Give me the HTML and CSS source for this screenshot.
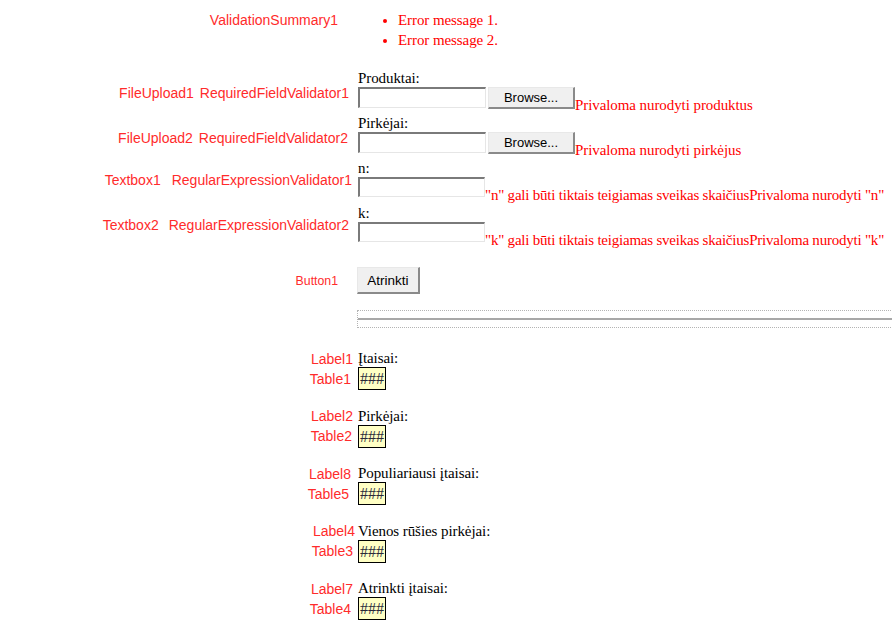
FILE: index.html
```html
<!DOCTYPE html>
<html>
<head>
<meta charset="utf-8">
<title>Atrinkimas</title>
<link rel="stylesheet" href="styles.css">
</head>
<body>
<div class="page">

  <div class="row row-summary">
    <div class="lab pr20 lab-top">ValidationSummary1</div>
    <div class="cnt">
      <ul class="errors">
        <li>Error message 1.</li>
        <li>Error message 2.</li>
      </ul>
    </div>
  </div>

  <div class="row row-field">
    <div class="lab pr9 lab-file"><span>FileUpload1</span><span class="gap6">RequiredFieldValidator1</span></div>
    <div class="cnt">
      <div class="caption">Produktai:</div>
      <div class="inputline">
        <input class="tb" type="text">
        <button class="browse" type="button">Browse...</button>
        <span class="err">Privaloma nurodyti produktus</span>
      </div>
    </div>
  </div>

  <div class="row row-field">
    <div class="lab pr10 lab-file"><span>FileUpload2</span><span class="gap6">RequiredFieldValidator2</span></div>
    <div class="cnt">
      <div class="caption">Pirkėjai:</div>
      <div class="inputline">
        <input class="tb" type="text">
        <button class="browse" type="button">Browse...</button>
        <span class="err">Privaloma nurodyti pirkėjus</span>
      </div>
    </div>
  </div>

  <div class="row row-field">
    <div class="lab pr6 lab-tb"><span>Textbox1</span><span class="gap11">RegularExpressionValidator1</span></div>
    <div class="cnt">
      <div class="caption">n:</div>
      <div class="inputline">
        <input class="tb tb-num" type="text">
        <span class="err err-long">"n" gali būti tiktais teigiamas sveikas skaičiusPrivaloma nurodyti "n"</span>
      </div>
    </div>
  </div>

  <div class="row row-field">
    <div class="lab pr9 lab-tb"><span>Textbox2</span><span class="gap10">RegularExpressionValidator2</span></div>
    <div class="cnt">
      <div class="caption">k:</div>
      <div class="inputline">
        <input class="tb tb-num" type="text">
        <span class="err err-long">"k" gali būti tiktais teigiamas sveikas skaičiusPrivaloma nurodyti "k"</span>
      </div>
    </div>
  </div>

  <div class="row row-btn">
    <div class="lab pr20 lab-small">Button1</div>
    <div class="cnt">
      <button class="submit" type="button">Atrinkti</button>
    </div>
  </div>

  <div class="row row-sep">
    <div class="lab"></div>
    <div class="cnt">
      <div class="sep"><div class="sep-line"></div></div>
    </div>
  </div>

  <div class="groups">
    <div class="group">
      <div class="row row-label"><div class="lab pr5">Label1</div><div class="cnt">Įtaisai:</div></div>
      <div class="row row-table"><div class="lab pr7">Table1</div><div class="cnt"><div class="tbl">###</div></div></div>
    </div>
    <div class="group">
      <div class="row row-label"><div class="lab pr5">Label2</div><div class="cnt">Pirkėjai:</div></div>
      <div class="row row-table"><div class="lab pr6">Table2</div><div class="cnt"><div class="tbl">###</div></div></div>
    </div>
    <div class="group">
      <div class="row row-label"><div class="lab pr7">Label8</div><div class="cnt">Populiariausi įtaisai:</div></div>
      <div class="row row-table"><div class="lab pr9">Table5</div><div class="cnt"><div class="tbl">###</div></div></div>
    </div>
    <div class="group">
      <div class="row row-label"><div class="lab pr3">Label4</div><div class="cnt">Vienos rūšies pirkėjai:</div></div>
      <div class="row row-table"><div class="lab pr5">Table3</div><div class="cnt"><div class="tbl">###</div></div></div>
    </div>
    <div class="group">
      <div class="row row-label"><div class="lab pr5">Label7</div><div class="cnt">Atrinkti įtaisai:</div></div>
      <div class="row row-table"><div class="lab pr7">Table4</div><div class="cnt"><div class="tbl">###</div></div></div>
    </div>
  </div>

</div>
</body>
</html>
```

FILE: styles.css
```css
html, body {
  margin: 0;
  padding: 0;
  background: #ffffff;
}

body {
  font-family: "Liberation Serif", "Times New Roman", serif;
  font-size: 15px;
  letter-spacing: -0.08px;
  color: #000;
  overflow: hidden;
}

.page {
  width: 892px;
  overflow: hidden;
}

.row {
  display: flex;
}

.lab {
  width: 358px;
  flex: none;
  box-sizing: border-box;
  text-align: right;
  font-family: "Liberation Sans", Arial, sans-serif;
  font-size: 14px;
  letter-spacing: 0;
  line-height: 16px;
  color: #ff2b2b;
  white-space: nowrap;
}

.lab-small {
  font-size: 12.3px;
}

.cnt {
  flex: 1;
  min-width: 0;
  white-space: nowrap;
}

.pr3 { padding-right: 3px; }
.pr5 { padding-right: 5px; }
.pr6 { padding-right: 6px; }
.pr7 { padding-right: 7px; }
.pr9 { padding-right: 9px; }
.pr10 { padding-right: 10px; }
.pr20 { padding-right: 20px; }

.gap6 { margin-left: 6px; }
.gap10 { margin-left: 10px; }
.gap11 { margin-left: 11px; }

/* validation summary */
.row-summary {
  height: 69px;
  align-items: flex-start;
}

.lab-top {
  padding-top: 12px;
}

.errors {
  margin: 0;
  padding: 10px 0 0 40px;
  color: #ff0000;
  line-height: 20px;
}

/* field blocks */
.row-field {
  height: 45px;
  align-items: center;
}

.lab-file {
  padding-top: 3px;
}

.lab-tb {
  padding-bottom: 4px;
}

.caption {
  height: 18px;
  line-height: 18px;
}

.inputline {
  display: flex;
  align-items: flex-end;
  height: 27px;
}

.tb {
  align-self: flex-start;
  width: 128px;
  height: 21px;
  box-sizing: border-box;
  margin: 0;
  padding: 0;
  border-style: solid;
  border-width: 2px 1px 1px 2px;
  border-color: #7a7a7a #e6e6e6 #e6e6e6 #7a7a7a;
  background: #fff;
  outline: none;
}

.tb-num {
  width: 127px;
  height: 20px;
}

.browse {
  align-self: flex-start;
  width: 87px;
  height: 22px;
  margin: 0 0 0 2px;
  padding: 0;
  box-sizing: border-box;
  border-style: solid;
  border-width: 1px 2px 2px 1px;
  border-color: #e8e8e8 #8a8a8a #8a8a8a #e8e8e8;
  background: #f0f0f0;
  font-family: "Liberation Sans", Arial, sans-serif;
  font-size: 13px;
  letter-spacing: 0;
  color: #000;
}

.err {
  color: #ff0000;
  line-height: 18px;
}

.err-long {
  letter-spacing: -0.22px;
}

/* button row */
.row-btn {
  padding-top: 18px;
  align-items: center;
}

.submit {
  display: block;
  margin: 0 0 0 -1px;
  width: 63px;
  height: 27px;
  padding: 0;
  box-sizing: border-box;
  border-style: solid;
  border-width: 1px 2px 2px 1px;
  border-color: #e8e8e8 #8a8a8a #8a8a8a #e8e8e8;
  background: #f0f0f0;
  font-family: "Liberation Sans", Arial, sans-serif;
  font-size: 13.5px;
  letter-spacing: 0;
  color: #000;
}

/* separator panel */
.row-sep {
  margin-top: 16px;
}

.sep {
  margin-left: -1px;
  width: 600px;
  height: 18px;
  box-sizing: border-box;
  border: 1px dotted #b4b4b4;
  padding-top: 7px;
}

.sep-line {
  height: 2px;
  background: #a8a8a8;
}

/* labels and tables */
.groups {
  margin-top: 22px;
}

.group + .group {
  margin-top: 17.5px;
}

.row-label {
  height: 17px;
  line-height: 17px;
  align-items: center;
}

.row-table {
  height: 23px;
  align-items: center;
}

.tbl {
  width: 28px;
  height: 23px;
  box-sizing: border-box;
  border: 1px solid #000;
  background: #ffffc4;
  line-height: 21px;
  padding-left: 1px;
  font-size: 16px;
  letter-spacing: 0;
  color: #2a2a3a;
}
```
